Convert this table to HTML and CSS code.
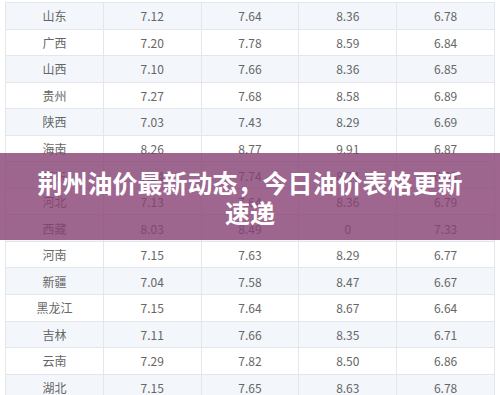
FILE: index.html
```html
<!DOCTYPE html>
<html lang="zh-CN">
<head>
  <meta charset="UTF-8">
  <meta name="viewport" content="width=device-width, initial-scale=1">
  <title>荆州油价最新动态</title>
  <link rel="stylesheet" href="styles.css">
</head>
<body>

  <div class="page">
    <table class="prix">
      <tbody>
        <tr><td>山东</td><td>7.12</td><td>7.64</td><td>8.36</td><td>6.78</td></tr>
        <tr><td>广西</td><td>7.20</td><td>7.78</td><td>8.59</td><td>6.84</td></tr>
        <tr><td>山西</td><td>7.10</td><td>7.66</td><td>8.36</td><td>6.85</td></tr>
        <tr><td>贵州</td><td>7.27</td><td>7.68</td><td>8.58</td><td>6.89</td></tr>
        <tr><td>陕西</td><td>7.03</td><td>7.43</td><td>8.29</td><td>6.69</td></tr>
        <tr><td>海南</td><td>8.26</td><td>8.77</td><td>9.91</td><td>6.87</td></tr>
        <tr><td>广东</td><td>7.24</td><td>7.74</td><td>8.74</td><td>6.80</td></tr>
        <tr><td>河北</td><td>7.13</td><td>7.64</td><td>8.36</td><td>6.79</td></tr>
        <tr><td>西藏</td><td>8.03</td><td>8.49</td><td>0</td><td>7.33</td></tr>
        <tr><td>河南</td><td>7.15</td><td>7.63</td><td>8.29</td><td>6.77</td></tr>
        <tr><td>新疆</td><td>7.04</td><td>7.58</td><td>8.47</td><td>6.67</td></tr>
        <tr><td>黑龙江</td><td>7.15</td><td>7.64</td><td>8.67</td><td>6.64</td></tr>
        <tr><td>吉林</td><td>7.11</td><td>7.66</td><td>8.35</td><td>6.71</td></tr>
        <tr><td>云南</td><td>7.29</td><td>7.82</td><td>8.50</td><td>6.86</td></tr>
        <tr><td>湖北</td><td>7.15</td><td>7.65</td><td>8.63</td><td>6.78</td></tr>
      </tbody>
    </table>

    <div class="banniere">
      <h1>荆州油价最新动态，今日油价表格更新速递</h1>
    </div>
  </div>

</body>
</html>
```

FILE: styles.css
```css
body {
  font-family: "Noto Sans CJK SC", "Noto Sans", sans-serif;
  margin: 0;
  background-color: white;
  overflow: hidden;
}

.page {
  position: relative;
  height: 395px;
  padding: 2px 5px 0;
  box-sizing: border-box;
}

.prix {
  width: 100%;
  table-layout: fixed;
  border-collapse: collapse;
}

.prix td {
  height: 25.55px;
  padding: 0;
  border: 1px solid #e3e6ea;
  text-align: center;
  font-size: 12px;
  color: #666;
}

.prix tr:nth-child(odd) {
  background-color: #f3f7fc;
}

.banniere {
  position: absolute;
  top: 153px;
  left: 0;
  right: 0;
  height: 87px;
  padding: 0 30px;
  display: flex;
  align-items: center;
  justify-content: center;
  background-color: rgba(135, 65, 115, 0.8);
}

.banniere h1 {
  margin: 0;
  text-align: center;
  color: white;
  font-size: 25px;
  line-height: 30px;
  font-weight: bold;
}
```
